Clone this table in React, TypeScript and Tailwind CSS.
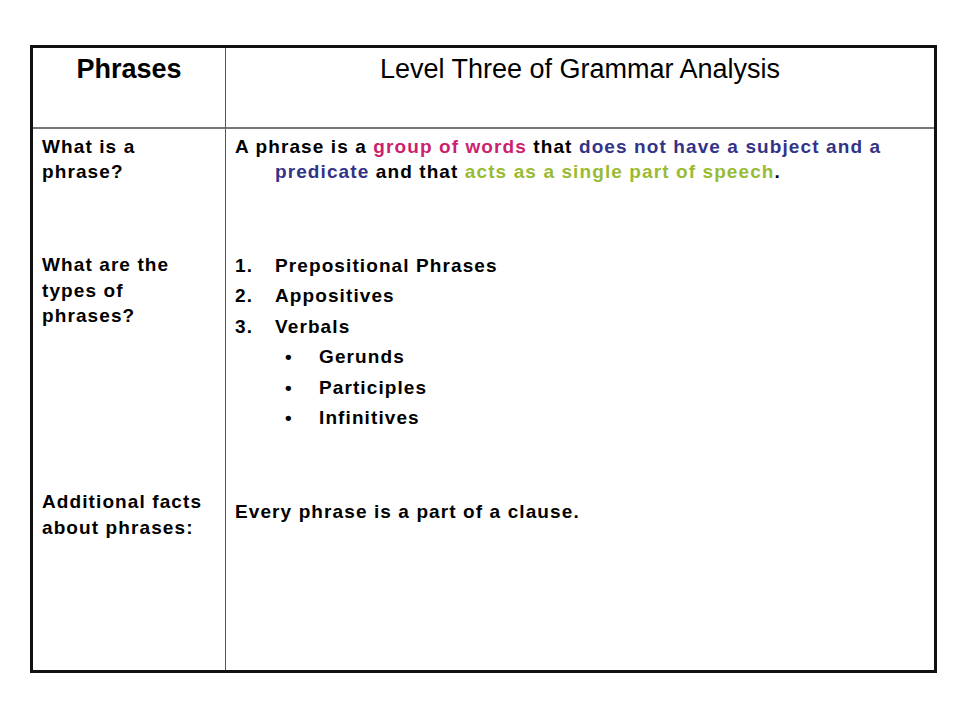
import React from "react";

export default function App() {
  const font = { fontFamily: '"Liberation Sans", Arial, sans-serif' };
  return (
    <div className="w-[960px] h-[720px] bg-white relative" style={font}>
      <div className="pt-[45px] pl-[30px]">
        <div className="w-[907px] h-[628px] border-[3px] border-[#111] grid grid-cols-[193px_1fr] grid-rows-[81px_123px_236px_1fr] text-black">
          {/* Header */}
          <div className="border-r border-r-[#555] border-b-2 border-b-[#777] text-center pt-[7px] text-[27px] leading-[28px] font-bold">
            Phrases
          </div>
          <div className="border-b-2 border-b-[#777] text-center pt-[7px] text-[27px] leading-[28px]">
            Level Three of Grammar Analysis
          </div>

          {/* Row 1 */}
          <div className="border-r border-r-[#555] pl-[9px] pt-[5px] text-[19px] leading-[25px] font-bold tracking-[1.1px]">
            What is a<br />phrase?
          </div>
          <div className="pl-[9px] pr-[6px] pt-[5px] text-[19px] leading-[25px] font-bold tracking-[1.1px]">
            <p className="pl-[40px] -indent-[40px]">
              A phrase is a <span className="text-[#cc1f6f]">group of words</span> that{" "}
              <span className="text-[#333388]">does not have a subject and a predicate</span> and that{" "}
              <span className="text-[#99bb33]">acts as a single part of speech</span>.
            </p>
          </div>

          {/* Row 2 */}
          <div className="border-r border-r-[#555] pl-[9px] text-[19px] leading-[25.5px] font-bold tracking-[1.1px]">
            What are the<br />types of<br />phrases?
          </div>
          <div className="pl-[9px] -mt-[1.5px] text-[19px] leading-[30.5px] font-bold tracking-[1.1px]">
            <div className="flex"><span className="w-[40px]">1.</span><span>Prepositional Phrases</span></div>
            <div className="flex"><span className="w-[40px]">2.</span><span>Appositives</span></div>
            <div className="flex"><span className="w-[40px]">3.</span><span>Verbals</span></div>
            <div className="flex pl-[40px]"><span className="w-[44px] pl-[10px]">•</span><span>Gerunds</span></div>
            <div className="flex pl-[40px]"><span className="w-[44px] pl-[10px]">•</span><span>Participles</span></div>
            <div className="flex pl-[40px]"><span className="w-[44px] pl-[10px]">•</span><span>Infinitives</span></div>
          </div>

          {/* Row 3 */}
          <div className="border-r border-r-[#555] pl-[9px] pt-[1px] text-[19px] leading-[25.5px] font-bold tracking-[1.1px]">
            Additional facts<br />about phrases:
          </div>
          <div className="pl-[9px] pt-[11px] text-[19px] leading-[25px] font-bold tracking-[1.1px]">
            Every phrase is a part of a clause.
          </div>
        </div>
      </div>
    </div>
  );
}
